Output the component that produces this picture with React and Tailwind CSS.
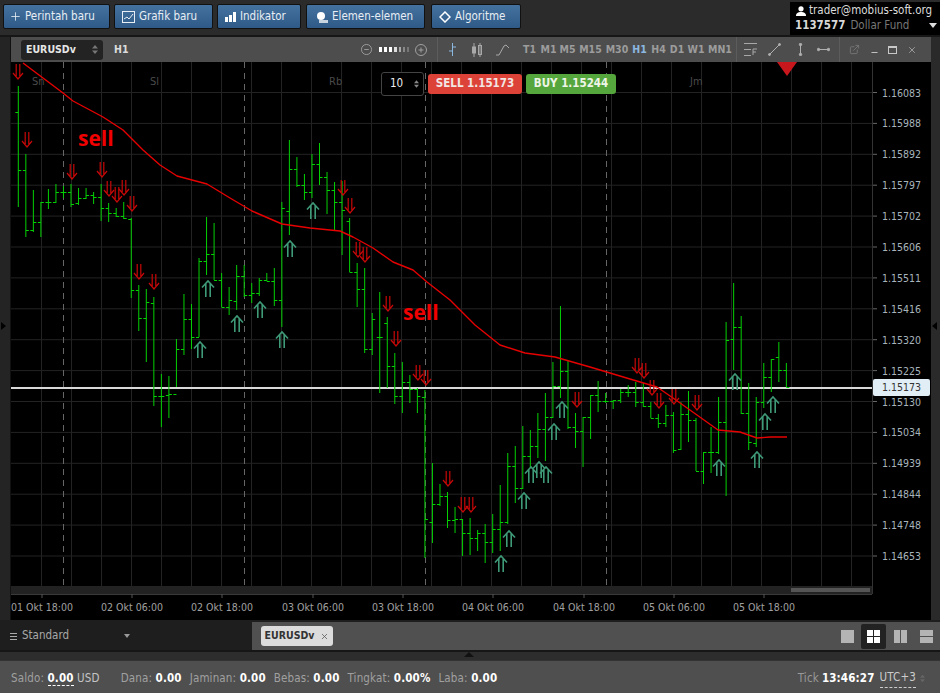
import { Plus, X, Minus, ExternalLink } from 'lucide-react';

// high, low, open, close in page pixels, one bar every 7.53px
const bars = [
  [86,207,112,170],[154,237,170,230],[190,232,230,222],[202,237,222,202],[189,209,202,202],[184,203,202,192],
  [186,198,192,192],[184,207,192,204],[188,205,203,198],[188,199,198,195],[192,204,195,197],[184,221,197,208],
  [203,222,208,213],[208,217,213,216],[202,219,216,218],[218,298,219,290],[285,331,290,318],[289,362,318,302],
  [297,406,303,396],[374,427,396,396],[376,418,395,394],[339,387,394,349],[294,355,349,319],[304,349,319,337],
  [258,337,337,261],[217,275,261,254],[223,280,254,280],[273,307,280,307],[287,315,307,300],[265,310,301,276],
  [265,297,276,295],[283,303,295,293],[278,296,293,280],[273,281,280,281],[268,306,281,300],[202,327,300,208],
  [140,235,211,169],[157,187,169,185],[174,200,185,192],[154,198,192,164],[143,185,164,177],[172,214,177,190],
  [182,230,190,202],[181,255,202,210],[218,272,221,272],[263,307,272,289],[268,353,289,349],[313,355,349,319],
  [292,393,337,337],[317,388,323,366],[353,404,366,396],[362,413,396,382],[375,403,382,389],[388,413,389,396],
  [390,558,397,519],[463,543,522,504],[484,506,504,496],[492,528,496,520],[507,533,520,519],[519,556,519,533],
  [518,555,533,538],[530,551,538,533],[524,563,533,542],[514,553,542,529],[485,551,529,522],[453,524,522,466],
  [446,503,466,488],[426,489,488,456],[430,467,456,446],[413,458,446,429],[393,461,429,417],[362,418,417,386],
  [306,398,386,371],[360,429,371,427],[413,448,427,431],[417,467,431,417],[395,439,417,395],[381,412,395,401],
  [393,403,401,401],[400,409,401,400],[389,403,400,392],[385,397,392,392],[382,407,392,402],[383,407,402,406],
  [402,418,406,418],[414,428,418,423],[405,427,423,415],[412,453,415,450],[402,450,449,414],[391,442,414,420],
  [418,471,420,471],[452,484,471,452],[427,473,452,452],[397,454,452,422],[322,496,422,340],[283,370,339,327],
  [316,414,327,413],[383,450,413,442],[397,447,443,402],[363,408,402,377],[359,392,377,359],[342,382,357,370],
  [363,387,370,387],
];

// tip of each arrow
const sellArrows = [
  [18,79],[27,147],[72,179],[102,177],[109,196],[117,202],[124,195],[132,211],[139,279],[154,289],
  [343,195],[350,213],[358,257],[365,262],[388,311],[396,346],[418,380],[426,385],[448,486],[463,512],
  [471,512],[577,407],[637,373],[644,378],[652,395],[659,408],[674,404],[697,410],
];
const buyArrows = [
  [208,281],[200,342],[237,316],[260,302],[282,332],[290,241],[313,203],[501,556],[509,531],[524,493],
  [531,467],[539,462],[546,467],[554,424],[562,402],[719,460],[735,374],[757,452],[765,414],[773,397],
];

const ma = '23,63 63,93 73,101 103,117 123,130 143,150 160,165 177,176 207,184 230,198 252,211 282,224 310,228 340,231 353,237 373,248 393,262 413,270 427,282 450,300 475,325 500,345 525,353 555,357 590,367 630,379 657,387 673,398 697,415 718,430 740,432 757,438 770,437 787,437';

const prices = ['1.16083','1.15988','1.15892','1.15797','1.15702','1.15606','1.15511','1.15416','1.15320','1.15225','1.15130','1.15034','1.14939','1.14844','1.14748','1.14653'];
const times = [
  [42,'01 Okt 18:00'],[132,'02 Okt 06:00'],[222,'02 Okt 18:00'],[313,'03 Okt 06:00'],[403,'03 Okt 18:00'],
  [493,'04 Okt 06:00'],[584,'04 Okt 18:00'],[674,'05 Okt 06:00'],[764,'05 Okt 18:00'],
];
const frames = [
  ['T1','w-[19px]'],['M1','w-[19px]'],['M5','w-[19px]'],['M15','w-[27px]'],['M30','w-[26px]'],['H1','w-[19px]'],['H4','w-[19px]'],['D1','w-[18px]'],['W1','w-[20px]'],['MN1','w-[28px]'],
];

function TopButton({ className, icon, label }) {
  return (
    <button className={`h-[25px] flex items-center gap-[4px] pl-[7px] rounded-[2px] border border-[#111] bg-gradient-to-b from-[#44729f] to-[#2f5a88] text-[11.5px] text-[#e8eef4] ${className}`}>
      {icon}
      {label}
    </button>
  );
}

function Stat({ label, value, className }) {
  return (
    <span className={className}>
      <span className="text-[#a0a0a0]">{label}: </span>
      <b className="text-white">{value}</b>
    </span>
  );
}

function Chart() {
  const grid = '#232323';
  return (
    <svg viewBox="11 62 920 558" width="920" height="558" className="block bg-black">
      {Array.from({ length: 28 }, (_, i) => (
        <line key={i} x1={41.5 + i * 30} x2={41.5 + i * 30} y1="62" y2="586" stroke={grid} />
      ))}
      {prices.map((p, i) => (
        <line key={p} x1="11" x2="872" y1={92.5 + i * 30.9} y2={92.5 + i * 30.9} stroke={grid} />
      ))}
      {[63.5, 244.5, 425.5, 606.5].map((x) => (
        <line key={x} x1={x} x2={x} y1="62" y2="586" stroke="#666" strokeDasharray="6 5" />
      ))}
      <g fill="#4a4a4a" fontSize="11">
        <text x="32" y="85">Sn</text>
        <text x="150" y="85">Sl</text>
        <text x="329" y="85">Rb</text>
        <text x="690" y="85">Jm</text>
      </g>
      <line x1="11" x2="873" y1="388" y2="388" stroke="#d8d8d8" strokeWidth="2" />
      {bars.map(([h, l, o, c], i) => {
        const x = 18.3 + i * 7.53;
        return (
          <g key={i} stroke="#04d004" strokeWidth="1">
            <line x1={x} x2={x} y1={h} y2={l} />
            <line x1={x - 3} x2={x} y1={o + 0.5} y2={o + 0.5} />
            <line x1={x} x2={x + 3} y1={c + 0.5} y2={c + 0.5} />
          </g>
        );
      })}
      <polyline points={ma} fill="none" stroke="#e60000" strokeWidth="1.4" strokeLinejoin="round" />
      {sellArrows.map(([x, y]) => (
        <path key={`${x}-${y}`} d={`M${x - 1.8} ${y - 15}V${y - 3}M${x + 1.8} ${y - 15}V${y - 3}M${x - 5} ${y - 6}L${x} ${y}L${x + 5} ${y - 6}`} fill="none" stroke="#c80808" strokeWidth="1.2" />
      ))}
      {buyArrows.map(([x, y]) => (
        <path key={`${x}-${y}`} d={`M${x - 2.2} ${y + 16}V${y + 3}M${x + 2.2} ${y + 16}V${y + 3}M${x - 6} ${y + 6.5}L${x} ${y}L${x + 6} ${y + 6.5}`} fill="none" stroke="#3f9a78" strokeWidth="1.6" />
      ))}
      <g fill="#f00000" fontSize="21" fontWeight="700" fontFamily="'Open Sans', sans-serif">
        <text x="78" y="146">sell</text>
        <text x="403" y="320">sell</text>
      </g>
      <path d="M777 62H797L787 76Z" fill="#c8161d" />
      <rect x="11" y="586" width="861" height="8" fill="#222" />
      <rect x="791" y="588" width="79" height="4" fill="#555" />
      <line x1="11" x2="872" y1="594.5" y2="594.5" stroke="#3a3a3a" />
      <line x1="872.5" x2="872.5" y1="62" y2="594" stroke="#333" />
      {prices.map((p, i) => (
        <g key={p}>
          <line x1="873" x2="877" y1={92.5 + i * 30.9} y2={92.5 + i * 30.9} stroke="#666" />
          <text x="882" y={96.5 + i * 30.9} fill="#a8b4bc" fontSize="10.5">{p}</text>
        </g>
      ))}
      {times.map(([x, t]) => (
        <g key={t}>
          <line x1={x} x2={x} y1="594" y2="598" stroke="#555" />
          <text x={x} y="611" textAnchor="middle" fill="#a0a0a0" fontSize="10.5">{t}</text>
        </g>
      ))}
    </svg>
  );
}

export default function App() {
  return (
    <div className="w-[940px] h-[693px] overflow-hidden flex flex-col bg-[#1e1e1e] font-['DejaVu_Sans_Condensed','DejaVu_Sans',sans-serif] text-[11.5px]">
      {/* Top bar */}
      <div className="h-[37px] flex items-start bg-[#2b2b2b] border-b-2 border-[#161616]">
        <div className="flex gap-[4px] pl-[3px] pt-[4px]">
          <TopButton className="w-[107px]" label="Perintah baru" icon={<Plus className="-ml-[2px] -mr-px" size={13} strokeWidth={1.5} />} />
          <TopButton className="w-[99px]" label="Grafik baru" icon={
            <svg width="13" height="12" viewBox="0 0 13 12" fill="none" stroke="#e8eef4"><rect x=".5" y=".5" width="12" height="11" /><path d="M2 8l3-2 2 2 4-5" /></svg>
          } />
          <TopButton className="w-[84px]" label="Indikator" icon={
            <svg width="11" height="10" viewBox="0 0 11 10" fill="#fff"><rect y="5" width="3" height="5" /><rect x="4" y="3" width="3" height="7" /><rect x="8" width="3" height="10" /></svg>
          } />
          <TopButton className="w-[119px] ml-px pl-[9px]" label="Elemen-elemen" icon={
            <svg width="12" height="12" viewBox="0 0 12 12" fill="#fff"><circle cx="5" cy="5" r="4" /><path d="M3 9h9v3H3z" fill="#c8d4e0" /></svg>
          } />
          <TopButton className="w-[90px] ml-[2px]" label="Algoritme" icon={
            <svg width="12" height="12" viewBox="0 0 12 12" fill="none" stroke="#fff" strokeWidth="1.5"><path d="M6 1l5 5-5 5-5-5z" /></svg>
          } />
        </div>
        <div className="ml-auto w-[150px] h-[33px] mt-[2px] bg-black pl-[5px] pt-[1px]">
          <div className="flex items-center gap-[3px] text-[#dcdcdc] h-[15px]">
            <svg className="ml-px" width="10" height="10" viewBox="0 0 10 10" fill="#fff"><circle cx="5" cy="2.8" r="2.6" /><path d="M0 10c0-3 2-4 5-4s5 1 5 4z" /></svg>
            trader@mobius-soft.org
          </div>
          <div className="flex items-center h-[15px] pr-[2px]">
            <b className="text-[#d8d8d8]">1137577</b>
            <span className="ml-[5px] text-[#777]">Dollar Fund</span>
            <span className="ml-auto mr-[1px] w-0 h-0 border-x-[4px] border-t-[5px] border-x-transparent border-t-[#ddd]" />
          </div>
        </div>
      </div>

      {/* Chart row */}
      <div className="h-[583px] flex">
        <div className="w-[11px] flex items-center bg-[#242424] border-r border-[#111]">
          <span className="w-0 h-0 mt-[-6px] ml-[1px] border-y-[4px] border-l-[5px] border-y-transparent border-l-[#000]" />
        </div>
        <div className="w-[920px] relative">
          {/* Toolbar */}
          <div className="h-[25px] flex items-center bg-[#4d4d4d] text-[#9c9c9c]">
            <div className="ml-[10px] w-[82px] h-[20px] flex items-center justify-between pl-[5px] pr-[5px] rounded-[3px] bg-[#232323] text-[#e6e6e6] font-bold text-[10.5px]">
              EURUSDv
              <svg width="6" height="11" viewBox="0 0 6 11" fill="#777"><path d="M3 1l3 3.5H0zM3 10L0 6.5h6z" /></svg>
            </div>
            <b className="ml-[11px] w-[247px] text-[#dcdcdc] text-[10.5px]">H1</b>
            <svg width="11" height="11" viewBox="0 0 12 12" fill="none" stroke="#a0a0a0"><circle cx="6" cy="6" r="5.5" /><path d="M3.5 6h5" /></svg>
            <span className="ml-[7px] flex gap-[2px] items-center">
              <i className="w-[3px] h-[5px] bg-white" /><i className="w-[3px] h-[5px] bg-white" /><i className="w-[3px] h-[5px] bg-white" /><i className="w-[3px] h-[5px] bg-[#ddd]" /><i className="w-[2px] h-[5px] bg-[#aaa]" /><i className="w-[2px] h-[5px] bg-[#888]" /><i className="w-[2px] h-[5px] bg-[#777]" />
            </span>
            <svg className="ml-[6px]" width="12" height="12" viewBox="0 0 12 12" fill="none" stroke="#a0a0a0"><circle cx="6" cy="6" r="5.5" /><path d="M3.5 6h5M6 3.5v5" /></svg>
            <span className="ml-[10px] h-[25px] border-l border-[#5c5c5c]" />
            <svg className="ml-[10px]" width="9" height="15" viewBox="0 0 9 15" fill="none" stroke="#8cb8e0"><path d="M4.500 1v13M1 9h3.500M4.500 5H8" /></svg>
            <svg className="ml-[15px]" width="10" height="14" viewBox="0 0 10 14" fill="none" stroke="#a8a8a8"><path d="M2 0v14M8 0v14" /><rect x=".5" y="4" width="3" height="6" fill="#a8a8a8" /><rect x="6.500" y="2.500" width="3" height="9" /></svg>
            <svg className="ml-[14px]" width="13" height="12" viewBox="0 0 13 12" fill="none" stroke="#a8a8a8"><path d="M0 11l3 0 5-9 2-1 3 3" /></svg>
            <div className="ml-[11px] flex font-bold text-[10.5px] text-center">
              {frames.map(([f, w]) => (
                <span key={f} className={`${w} ${f === 'H1' ? 'text-[#8cb8e0]' : ''}`}>{f}</span>
              ))}
            </div>
            <span className="ml-[2px] h-[25px] border-l border-[#5c5c5c]" />
            <svg className="ml-[7px]" width="14" height="13" viewBox="0 0 14 13" fill="none" stroke="#a8a8a8"><path d="M0 .5h13M0 6.500h7M0 12.500h7M9 12V6h4M9 9h3" /></svg>
            <svg className="ml-[10px]" width="13" height="13" viewBox="0 0 13 13" stroke="#b0b0b0" fill="#b0b0b0"><path d="M1.500 11.500l10-10" /><circle cx="1.500" cy="11.500" r="1" /><circle cx="11.500" cy="1.500" r="1" /></svg>
            <svg className="ml-[17px]" width="5" height="13" viewBox="0 0 5 13" stroke="#b0b0b0" fill="#b0b0b0"><path d="M2.500 1v11" /><circle cx="2.500" cy="1.500" r="1.200" /><circle cx="2.500" cy="11.500" r="1.200" /></svg>
            <svg className="ml-[14px]" width="13" height="5" viewBox="0 0 13 5" stroke="#b0b0b0" fill="#b0b0b0"><path d="M1 2.500h11" /><circle cx="1.500" cy="2.500" r="1.200" /><circle cx="11.500" cy="2.500" r="1.200" /></svg>
            <span className="ml-[9px] h-[25px] border-l border-[#5c5c5c]" />
            <ExternalLink className="ml-[9px]" size={11} color="#777" />
            <Minus className="ml-[10px] mt-[5px]" size={9} color="#c8c8c8" strokeWidth={2.5} />
            <span className="ml-[9px] w-[9px] h-[8px] border border-t-2 border-[#c8c8c8]" />
            <X className="ml-[10px]" size={10} color="#a8a8a8" />
          </div>
          <Chart />
          {/* Order widget over the chart */}
          <div className="absolute left-[370px] top-[35px] flex items-center font-bold">
            <div className="w-[43px] h-[24px] flex items-center justify-between pl-[8px] pr-[4px] rounded-[3px] border border-[#444] bg-black text-[#eee] font-normal">
              10
              <svg width="5" height="10" viewBox="0 0 6 11" fill="#888"><path d="M3 1l3 3.500H0zM3 10L0 6.500h6z" /></svg>
            </div>
            <div className="ml-[4px] w-[94px] h-[20px] flex items-center justify-center rounded-[3px] bg-[#dc4238] text-[#f2e6e4] text-[11.5px]">SELL&nbsp; <span className="font-semibold">1.15173</span></div>
            <div className="ml-[4px] w-[90px] h-[20px] flex items-center justify-center rounded-[3px] bg-[#55a63c] text-[#eef5e8] text-[11.5px]">BUY&nbsp; <span className="font-semibold">1.15244</span></div>
          </div>
          {/* Current price tag */}
          <div className="absolute left-[862px] top-[342px] w-[57px] h-[17px] flex items-center justify-center rounded-[2px] bg-[#e2eef5] text-[10.5px] text-[#333]">1.15173</div>
        </div>
        <div className="w-[9px] flex items-center bg-[#2a2a2a]">
          <span className="w-0 h-0 mt-[-6px] ml-[1px] border-y-[4px] border-r-[5px] border-y-transparent border-r-[#000]" />
        </div>
      </div>

      {/* Tabs */}
      <div className="h-[30px] mt-[2px] flex border-b-2 border-[#161616]">
        <div className="w-[252px] flex items-center pl-[10px] gap-[5px] bg-[#1e1e1e] text-[#a8a8a8]">
          <span className="flex flex-col gap-[2px]">
            <i className="w-[7px] h-px bg-[#aaa]" /><i className="w-[7px] h-px bg-[#aaa]" /><i className="w-[7px] h-px bg-[#aaa]" />
          </span>
          Standard
          <span className="ml-[50px] w-0 h-0 border-x-[3px] border-t-[4px] border-x-transparent border-t-[#999]" />
        </div>
        <div className="flex-1 flex items-center bg-[#505050] pl-[9px]">
          <div className="w-[72px] h-[20px] flex items-center justify-center gap-[6px] rounded-[3px] bg-[#dcdcdc] text-[#333] font-bold text-[10.5px]">
            EURUSDv
            <X size={9} color="#555" />
          </div>
          <div className="ml-auto flex items-center pr-[7px]">
            <i className="w-[13px] h-[13px] bg-[#b4b4b4]" />
            <span className="ml-[7px] w-[25px] h-[25px] flex items-center justify-center rounded-[2px] bg-[#222]">
              <span className="grid grid-cols-2 gap-px w-[13px] h-[13px]">
                <i className="bg-white" /><i className="bg-white" /><i className="bg-white" /><i className="bg-white" />
              </span>
            </span>
            <span className="ml-[8px] grid grid-cols-2 gap-px w-[13px] h-[13px]"><i className="bg-[#b4b4b4]" /><i className="bg-[#b4b4b4]" /></span>
            <span className="ml-[13px] grid grid-rows-2 gap-px w-[13px] h-[13px]"><i className="bg-[#b4b4b4]" /><i className="bg-[#b4b4b4]" /></span>
          </div>
        </div>
      </div>

      {/* Splitter */}
      <div className="h-[9px] flex justify-center bg-[#2d2d2d] border-b border-[#333]">
        <span className="w-0 h-0 ml-[-2px] border-x-[5px] border-b-[5px] border-x-transparent border-b-[#111]" />
      </div>

      {/* Status bar */}
      <div className="flex-1 flex items-center pl-[11px] pr-[15px] pt-[3px] bg-[#4f4f4f] text-[#b0b0b0] tracking-[0.15px]">
        <span>
          <span className="text-[#a0a0a0]">Saldo: </span>
          <b className="text-white border-b border-dashed border-white">0.00</b>
          <span className="text-[#c4c4c4]"> USD</span>
        </span>
        <Stat className="ml-[21px]" label="Dana" value="0.00" />
        <Stat className="ml-[8px]" label="Jaminan" value="0.00" />
        <Stat className="ml-[8px]" label="Bebas" value="0.00" />
        <Stat className="ml-[8px]" label="Tingkat" value="0.00%" />
        <Stat className="ml-[8px]" label="Laba" value="0.00" />
        <span className="ml-auto text-[#999]">Tick</span>
        <b className="ml-[3px] text-white">13:46:27</b>
        <span className="ml-[5px] text-[#ccc] border-b border-dashed border-[#ccc]">UTC+3</span>
        <svg className="ml-[4px]" width="5" height="11" viewBox="0 0 6 11" fill="#666"><path d="M3 1l3 3.500H0zM3 10L0 6.500h6z" /></svg>
      </div>
    </div>
  );
}
